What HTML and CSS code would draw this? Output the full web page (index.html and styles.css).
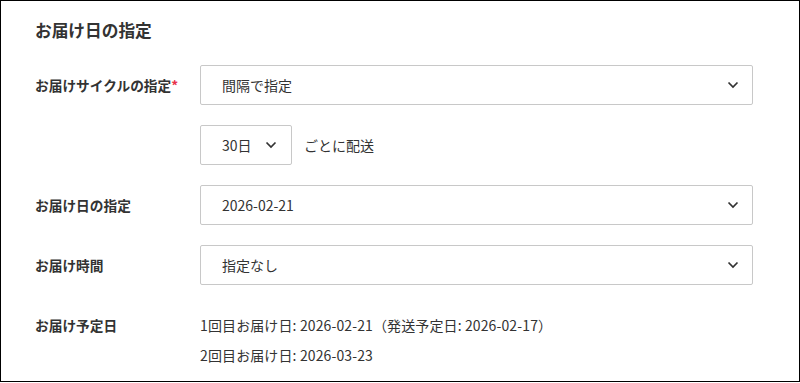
FILE: index.html
```html
<!DOCTYPE html>
<html lang="ja">
<head>
    <meta charset="UTF-8">
    <meta name="viewport" content="width=device-width, initial-scale=1.0">
    <title>お届け日の指定</title>
    <link rel="stylesheet" href="styles.css">
</head>
<body>
    <section class="delivery-box">
        <h2 class="delivery-title">お届け日の指定</h2>

        <div class="form-row">
            <label class="form-label">お届けサイクルの指定<span class="required">*</span></label>
            <div class="select-box">
                <span>間隔で指定</span>
                <svg class="chevron" width="12" height="8" viewBox="0 0 12 8"><path d="M1.5 1.5 L6 6 L10.5 1.5" fill="none" stroke="#333" stroke-width="1.7"/></svg>
            </div>
        </div>

        <div class="form-row">
            <div class="form-label"></div>
            <div class="select-box select-small">
                <span>30日</span>
                <svg class="chevron" width="12" height="8" viewBox="0 0 12 8"><path d="M1.5 1.5 L6 6 L10.5 1.5" fill="none" stroke="#333" stroke-width="1.7"/></svg>
            </div>
            <span class="interval-note">ごとに配送</span>
        </div>

        <div class="form-row">
            <label class="form-label">お届け日の指定</label>
            <div class="select-box">
                <span>2026-02-21</span>
                <svg class="chevron" width="12" height="8" viewBox="0 0 12 8"><path d="M1.5 1.5 L6 6 L10.5 1.5" fill="none" stroke="#333" stroke-width="1.7"/></svg>
            </div>
        </div>

        <div class="form-row">
            <label class="form-label">お届け時間</label>
            <div class="select-box">
                <span>指定なし</span>
                <svg class="chevron" width="12" height="8" viewBox="0 0 12 8"><path d="M1.5 1.5 L6 6 L10.5 1.5" fill="none" stroke="#333" stroke-width="1.7"/></svg>
            </div>
        </div>

        <div class="form-row schedule-row">
            <div class="form-label">お届け予定日</div>
            <div class="schedule-list">
                <p>1回目お届け日: 2026-02-21（発送予定日: 2026-02-17）</p>
                <p>2回目お届け日: 2026-03-23</p>
            </div>
        </div>
    </section>
</body>
</html>
```

FILE: styles.css
```css
body {
    margin: 0;
    padding: 0;
    font-family: "Noto Sans CJK JP", "Noto Sans", sans-serif;
    color: #333;
    background: white;
}

.delivery-box {
    box-sizing: border-box;
    width: 800px;
    height: 382px;
    border: 1px solid #000;
    padding: 17px 46px 0 34px;
    overflow: hidden;
}

.delivery-title {
    margin: 0 0 23px;
    font-size: 16.7px;
    line-height: 24px;
    font-weight: bold;
}

.form-row {
    display: flex;
    align-items: center;
    margin-bottom: 20px;
}

.form-label {
    width: 165px;
    flex-shrink: 0;
    font-size: 13.7px;
    font-weight: bold;
}

.required {
    color: #e8334a;
}

.select-box {
    box-sizing: border-box;
    flex: 1;
    height: 40px;
    display: flex;
    align-items: center;
    justify-content: space-between;
    padding: 0 13px 0 21px;
    border: 1px solid #c8c8c8;
    border-radius: 2px;
    font-size: 14px;
}

.select-small {
    flex: 0 0 92px;
    padding-right: 14px;
}

.interval-note {
    margin-left: 12px;
    font-size: 14px;
}

.schedule-row {
    align-items: flex-start;
    margin-top: 30px;
}

.schedule-row .form-label {
    line-height: 20px;
}

.schedule-list p {
    margin: 0 0 10px;
    font-size: 14px;
    line-height: 20px;
    letter-spacing: 0.12px;
}
```
